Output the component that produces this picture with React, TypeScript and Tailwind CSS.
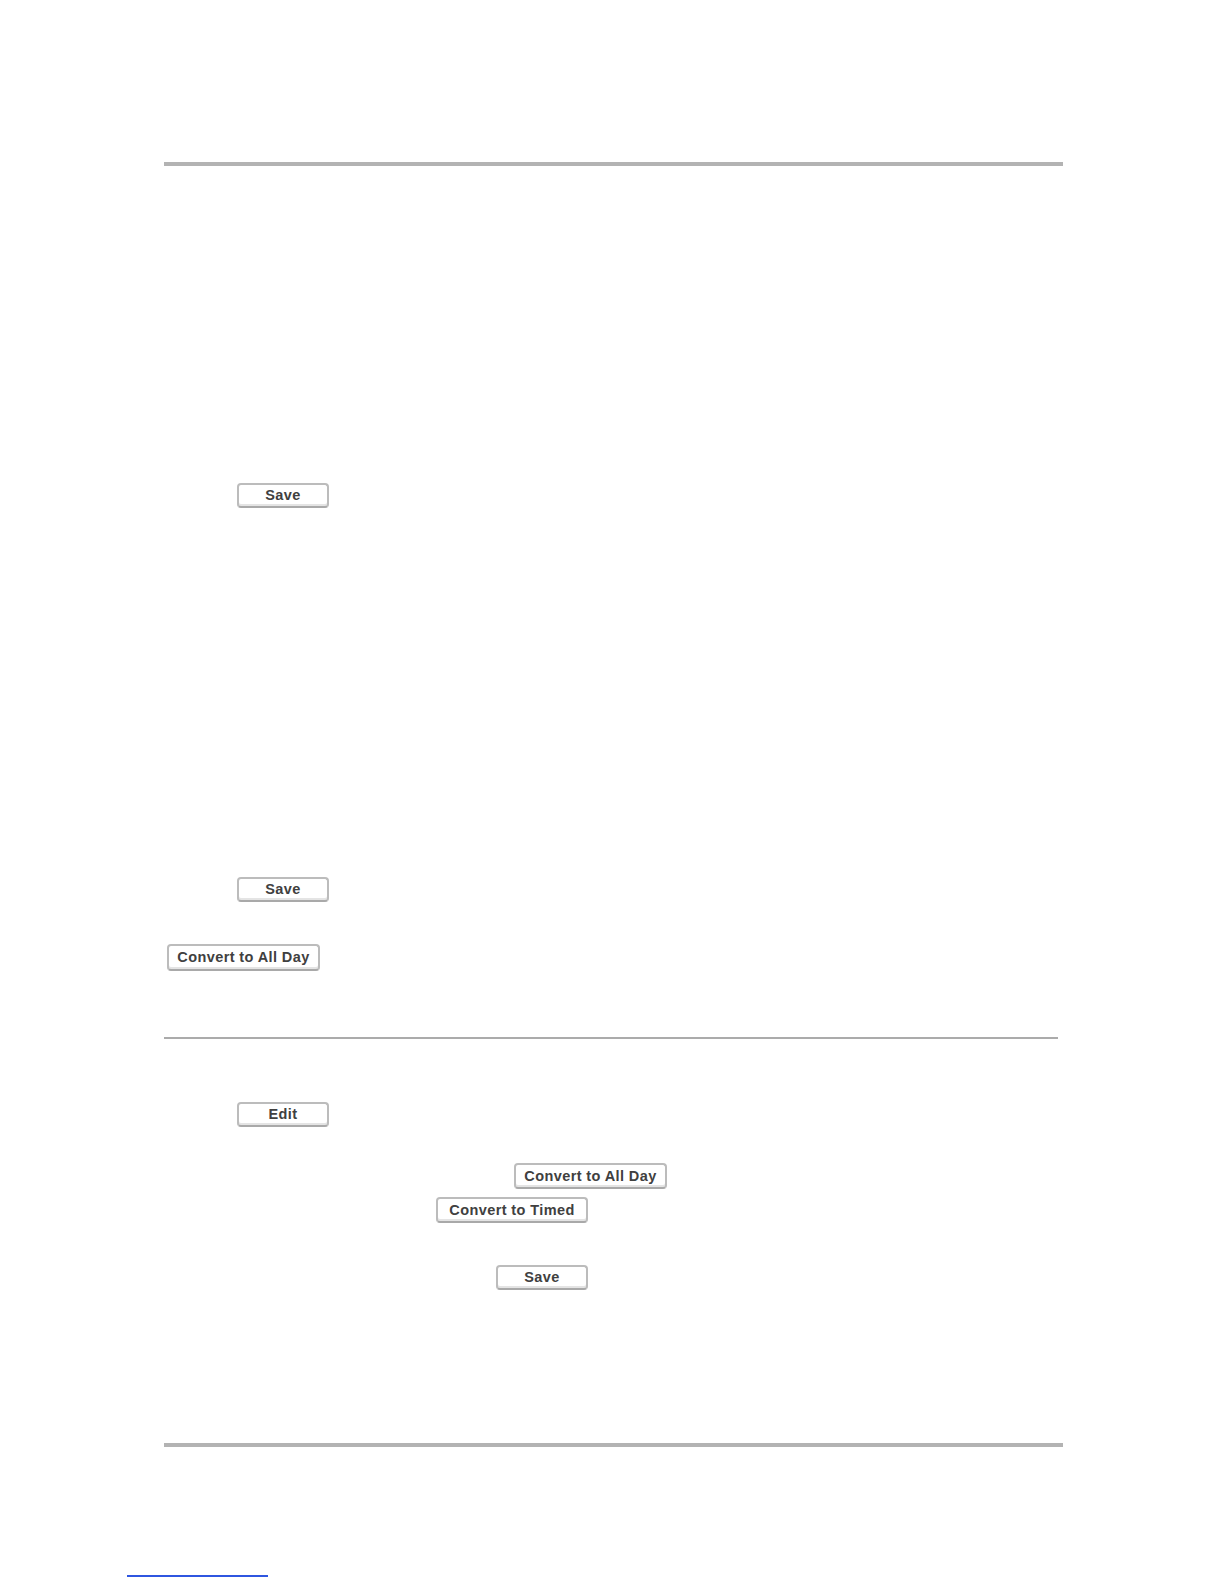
const Btn = ({ label, w, h = 'h-[25px]' }: { label: string; w: string; h?: string }) => (
  <div
    className={`${w} ${h} flex items-center justify-center bg-white border-2 border-[#bcbcbc] border-b-[#a9a9a9] rounded-[4px] shadow-[inset_0_-2px_0_#e4e4e4] text-[14.5px] font-bold tracking-[0.4px] text-[#404040] leading-none`}
    style={{ fontFamily: '"Liberation Sans", Arial, sans-serif' }}
  >
    {label}
  </div>
);

export default function App() {
  return (
    <div className="w-[1224px] h-[1584px] bg-white pt-[162px] overflow-hidden">
      {/* header rule */}
      <div className="ml-[164px] w-[899px] h-[4px] bg-[#b3b3b3]" />

      <div className="ml-[237px] mt-[317px]">
        <Btn label="Save" w="w-[92px]" />
      </div>

      <div className="ml-[237px] mt-[369px]">
        <Btn label="Save" w="w-[92px]" />
      </div>

      <div className="ml-[167px] mt-[42px]">
        <Btn label="Convert to All Day" w="w-[153px]" h="h-[27px]" />
      </div>

      {/* section divider */}
      <div className="ml-[164px] mt-[66px] w-[894px] h-[2px] bg-[#ababab]" />

      <div className="ml-[237px] mt-[63px]">
        <Btn label="Edit" w="w-[92px]" />
      </div>

      <div className="ml-[514px] mt-[36px]">
        <Btn label="Convert to All Day" w="w-[153px]" h="h-[26px]" />
      </div>

      <div className="ml-[436px] mt-[8px]">
        <Btn label="Convert to Timed" w="w-[152px]" h="h-[26px]" />
      </div>

      <div className="ml-[496px] mt-[42px]">
        <Btn label="Save" w="w-[92px]" />
      </div>

      {/* footer rule */}
      <div className="ml-[164px] mt-[153px] w-[899px] h-[4px] bg-[#b3b3b3]" />

      {/* footnote link underline */}
      <div className="ml-[127px] mt-[128px] w-[141px] h-[2px] bg-[#2f56e0]" />
    </div>
  );
}
